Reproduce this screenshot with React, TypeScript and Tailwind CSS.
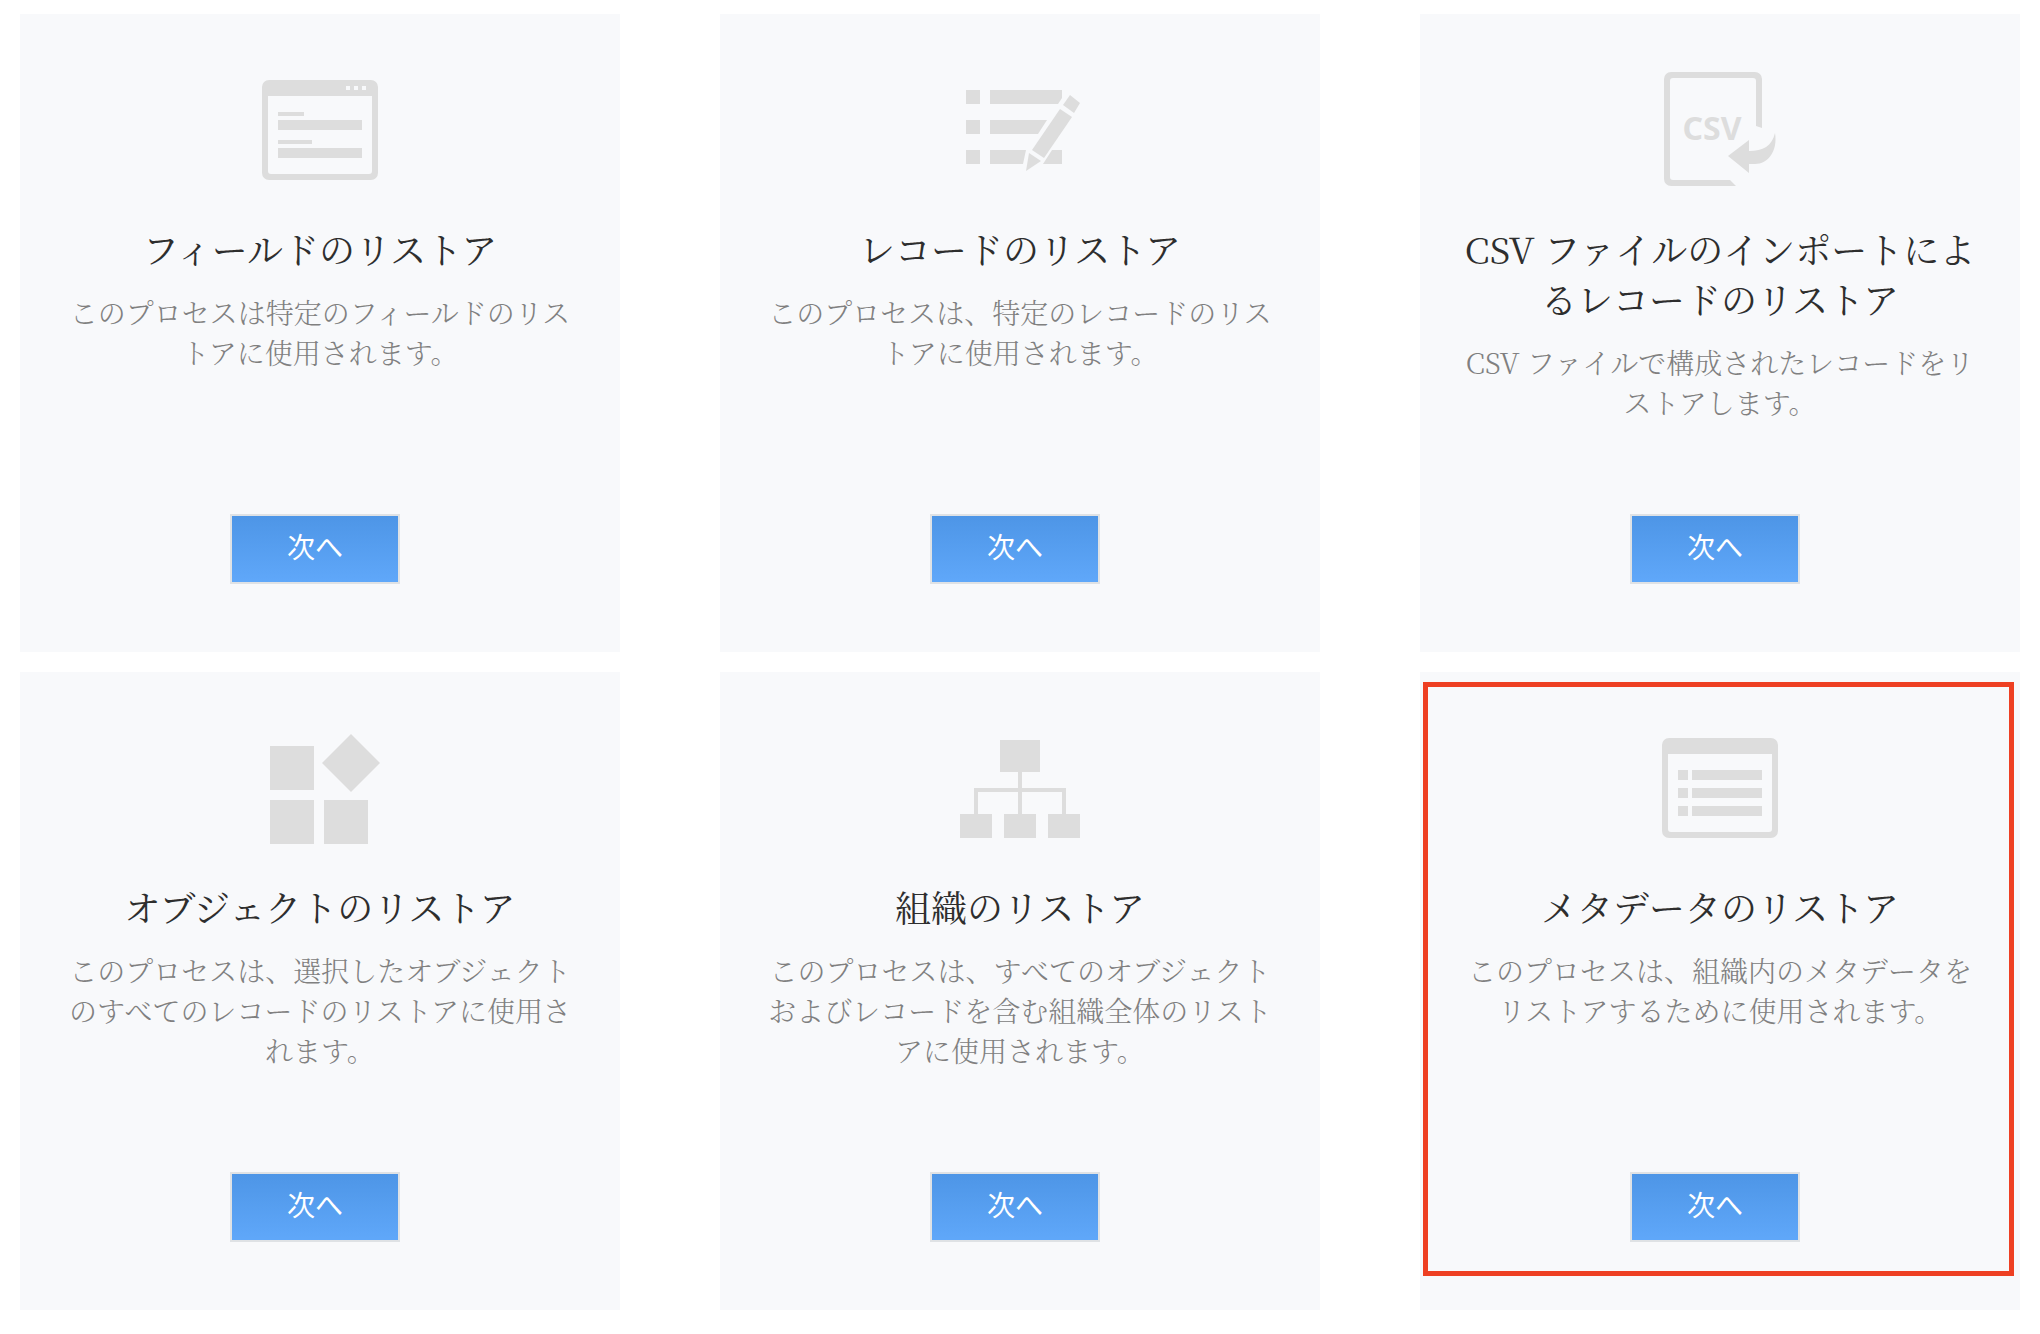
import type { ReactNode } from "react";
import clsx from "clsx";

type RestoreOption = {
  id: string;
  title: string;
  description: string;
  icon: ReactNode;
  highlighted?: boolean;
};

function OptionIcon({ children }: { children: ReactNode }) {
  return (
    <svg
      viewBox="0 0 120 120"
      className="h-[120px] w-[120px] shrink-0 fill-[#dddddd]"
      aria-hidden="true"
    >
      {children}
    </svg>
  );
}

function WindowFrame() {
  return (
    <path
      fillRule="evenodd"
      d="M9 10H111a7 7 0 0 1 7 7V103a7 7 0 0 1-7 7H9a7 7 0 0 1-7-7V17a7 7 0 0 1 7-7ZM8 26V101a3 3 0 0 0 3 3H109a3 3 0 0 0 3-3V26Z"
    />
  );
}

function FieldIcon() {
  return (
    <OptionIcon>
      <WindowFrame />
      <g className="fill-[#f8f9fb]">
        <rect x="86" y="16" width="4" height="4" />
        <rect x="94" y="16" width="4" height="4" />
        <rect x="102" y="16" width="4" height="4" />
      </g>
      <rect x="18" y="42" width="26" height="4" />
      <rect x="18" y="50" width="84" height="10" />
      <rect x="18" y="70" width="34" height="4" />
      <rect x="18" y="78" width="84" height="10" />
    </OptionIcon>
  );
}

function RecordIcon() {
  return (
    <OptionIcon>
      <rect x="6" y="20" width="14" height="14" />
      <rect x="6" y="50" width="14" height="14" />
      <rect x="6" y="80" width="14" height="14" />
      <path d="M30 20H102V28L98 34H30Z" />
      <path d="M30 50H87L78 64H30Z" />
      <path d="M30 80H66L63 94H30Z" />
      <path d="M92 80H102V94H83Z" />
      <path d="M100 39L112 47L84 88L72 80Z" />
      <path d="M110 25L120 33L114 43L103 35Z" />
      <path d="M69 83L81 91L66 101Z" />
    </OptionIcon>
  );
}

function CsvIcon() {
  return (
    <OptionIcon>
      <path d="M96 56V11a3 3 0 0 0-3-3H13a3 3 0 0 0-3 3V107a3 3 0 0 0 3 3H70L76 116H11a7 7 0 0 1-7-7V9a7 7 0 0 1 7-7H95a7 7 0 0 1 7 7V58Z" />
      <path d="M68 86L89 70V81C103 81 112 76 115 63C118 81 108 94 95 94H89V103Z" />
      <text
        x="52"
        y="70"
        textAnchor="middle"
        className="font-['Noto_Sans',sans-serif] text-[32px] font-bold"
      >
        CSV
      </text>
    </OptionIcon>
  );
}

function ObjectIcon() {
  return (
    <OptionIcon>
      <rect x="10" y="18" width="44" height="44" />
      <rect x="10" y="72" width="44" height="44" />
      <rect x="64" y="72" width="44" height="44" />
      <path d="M91 6L120 35L91 64L62 35Z" />
    </OptionIcon>
  );
}

function OrganizationIcon() {
  return (
    <OptionIcon>
      <rect x="40" y="12" width="40" height="32" />
      <rect x="58" y="44" width="4" height="42" />
      <path d="M14 60H106V86H102V64H18V86H14Z" />
      <rect x="0" y="86" width="32" height="24" />
      <rect x="44" y="86" width="32" height="24" />
      <rect x="88" y="86" width="32" height="24" />
    </OptionIcon>
  );
}

function MetadataIcon() {
  return (
    <OptionIcon>
      <WindowFrame />
      {[42, 60, 78].map((y) => (
        <g key={y}>
          <rect x="18" y={y} width="10" height="10" />
          <rect x="32" y={y} width="70" height="10" />
        </g>
      ))}
    </OptionIcon>
  );
}

const OPTIONS: RestoreOption[] = [
  {
    id: "field",
    title: "フィールドのリストア",
    description: "このプロセスは特定のフィールドのリストアに使用されます。",
    icon: <FieldIcon />,
  },
  {
    id: "record",
    title: "レコードのリストア",
    description: "このプロセスは、特定のレコードのリストアに使用されます。",
    icon: <RecordIcon />,
  },
  {
    id: "csv",
    title: "CSV ファイルのインポートによるレコードのリストア",
    description: "CSV ファイルで構成されたレコードをリストアします。",
    icon: <CsvIcon />,
  },
  {
    id: "object",
    title: "オブジェクトのリストア",
    description:
      "このプロセスは、選択したオブジェクトのすべてのレコードのリストアに使用されます。",
    icon: <ObjectIcon />,
  },
  {
    id: "organization",
    title: "組織のリストア",
    description:
      "このプロセスは、すべてのオブジェクトおよびレコードを含む組織全体のリストアに使用されます。",
    icon: <OrganizationIcon />,
  },
  {
    id: "metadata",
    title: "メタデータのリストア",
    description:
      "このプロセスは、組織内のメタデータをリストアするために使用されます。",
    icon: <MetadataIcon />,
    highlighted: true,
  },
];

function OptionCard({ id, title, description, icon, highlighted }: RestoreOption) {
  return (
    <section
      aria-labelledby={`${id}-title`}
      className={clsx(
        "flex min-h-[638px] flex-col items-center bg-[#f8f9fb] px-10 pt-14 pb-[68px] text-center",
        highlighted && "relative",
      )}
    >
      {icon}
      <h2
        id={`${id}-title`}
        className="mt-[34px] font-['Noto_Serif_CJK_JP','Noto_Sans_CJK_JP',serif] text-[36px] leading-[50px] font-normal text-[#2e2e2e]"
      >
        {title}
      </h2>
      <p className="mt-[18px] font-['Noto_Serif_CJK_JP','Noto_Sans_CJK_JP',serif] text-[28px] leading-[40px] font-light text-[#808080]">
        {description}
      </p>
      <div className="mt-auto pr-2.5">
        <button
          type="button"
          className="h-[70px] w-[170px] border-2 border-[#dfe2e5] bg-linear-to-b from-[#4d95e6] to-[#60a8fa] bg-origin-border pb-1.5 font-['Noto_Sans_CJK_JP',sans-serif] text-[28px] text-white"
        >
          次へ
        </button>
      </div>
      {highlighted && (
        <div className="pointer-events-none absolute top-[10px] right-[6px] bottom-[34px] left-[3px] border-5 border-[#ee4023]" />
      )}
    </section>
  );
}

export default function App() {
  return (
    <main
      lang="ja"
      className="grid grid-cols-3 gap-x-[100px] gap-y-5 bg-white px-5 pt-3.5 pb-6"
    >
      {OPTIONS.map((option) => (
        <OptionCard key={option.id} {...option} />
      ))}
    </main>
  );
}
